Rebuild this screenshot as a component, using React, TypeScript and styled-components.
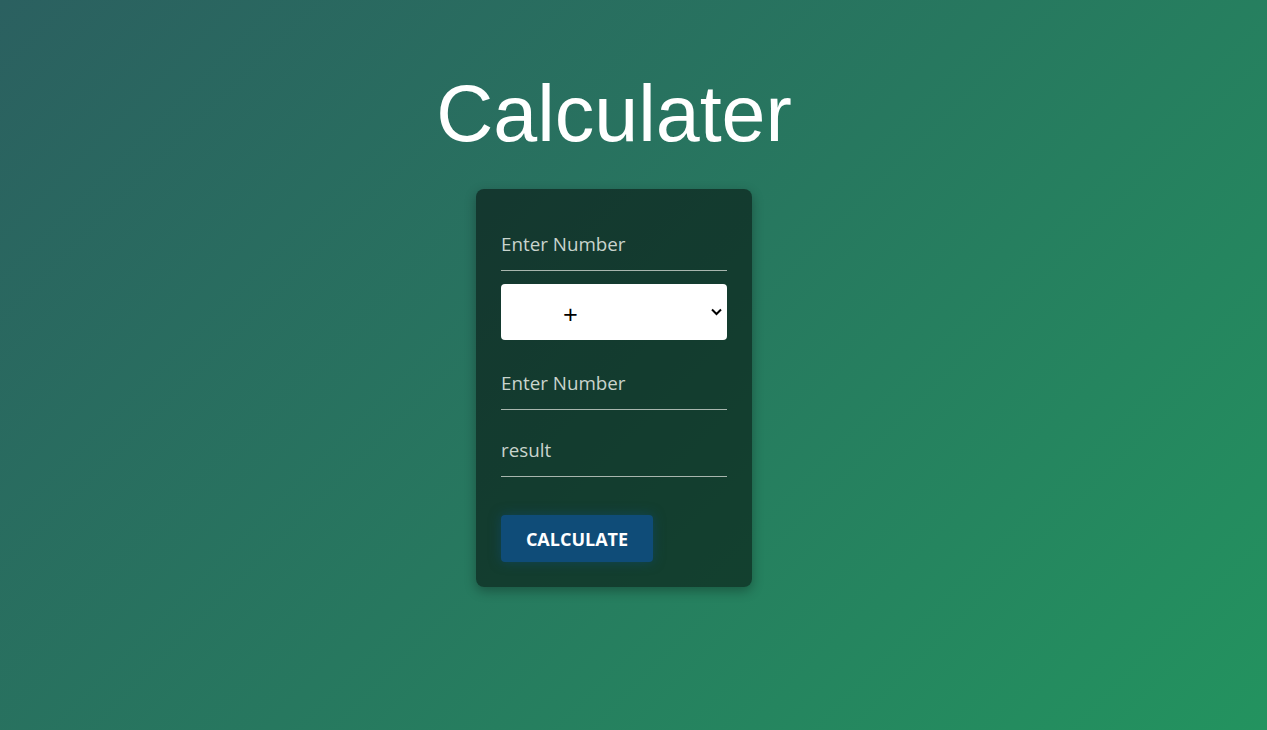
import React from "react";
import styled, { createGlobalStyle } from "styled-components";

const Global = createGlobalStyle`
  html, body { margin: 0; padding: 0; height: 100%; }
  body {
    min-height: 730px;
    background: linear-gradient(135deg, #2b6060 0%, #27785f 50%, #23935f 100%);
    font-family: "Open Sans", "Noto Sans", sans-serif;
  }
  #root { min-height: 730px; }
`;

const Page = styled.main`
  display: flex;
  flex-direction: column;
  align-items: center;
  padding: 68px 39px 0 0;
`;

const Title = styled.h1`
  margin: 0 0 29px;
  font-family: "Liberation Sans", Arial, sans-serif;
  font-weight: 400;
  font-size: 79px;
  line-height: 92px;
  color: #ffffff;
`;

const Card = styled.form`
  width: 226px;
  padding: 25px;
  background: rgba(0, 0, 0, 0.5);
  border-radius: 8px;
  box-shadow: 0 4px 12px rgba(0, 0, 0, 0.3);
  display: flex;
  flex-direction: column;
`;

const Field = styled.input<{ $gap?: number }>`
  box-sizing: border-box;
  width: 100%;
  height: 57px;
  margin-top: ${(p) => p.$gap ?? 0}px;
  padding: 3px 0 0;
  background: transparent;
  border: none;
  border-bottom: 1px solid #a8b6ae;
  font-family: "Open Sans", "Noto Sans", sans-serif;
  font-size: 18.8px;
  color: #ffffff;
  outline: none;
  &::placeholder { color: #c9d4cd; opacity: 1; }
`;

const SelectWrap = styled.div`
  position: relative;
  margin-top: 13px;
`;

const Select = styled.select`
  box-sizing: border-box;
  width: 100%;
  height: 56px;
  appearance: none;
  border: none;
  border-radius: 4px;
  background: #ffffff;
  padding: 4px 0 0 62px;
  font-family: "Open Sans", "Noto Sans", sans-serif;
  font-size: 26px;
  color: #000;
  outline: none;
`;

const Chevron = styled.svg`
  position: absolute;
  right: 5px;
  top: 24px;
  width: 11px;
  height: 8px;
  pointer-events: none;
`;

const Button = styled.button`
  align-self: flex-start;
  margin-top: 38px;
  width: 152px;
  height: 47px;
  border: none;
  border-radius: 4px;
  background: #0f4c78;
  box-shadow: 0 0 12px rgba(15, 76, 120, 0.55);
  color: #ffffff;
  font-family: "Open Sans", "Noto Sans", sans-serif;
  font-weight: 700;
  font-size: 18px;
  text-transform: uppercase;
  cursor: pointer;
`;

export default function App() {
  return (
    <>
      <Global />
      <Page>
        <Title>Calculater</Title>
        <Card onSubmit={(e) => e.preventDefault()}>
          <Field placeholder="Enter Number" />
          <SelectWrap>
            <Select defaultValue="+">
              <option value="+">+</option>
              <option value="-">-</option>
              <option value="*">*</option>
              <option value="/">/</option>
            </Select>
            <Chevron viewBox="0 0 11 8">
              <path d="M1 1.5 L5.5 6 L10 1.5" fill="none" stroke="#000" strokeWidth="2" />
            </Chevron>
          </SelectWrap>
          <Field $gap={13} placeholder="Enter Number" />
          <Field $gap={10} placeholder="result" />
          <Button type="submit">Calculate</Button>
        </Card>
      </Page>
    </>
  );
}
